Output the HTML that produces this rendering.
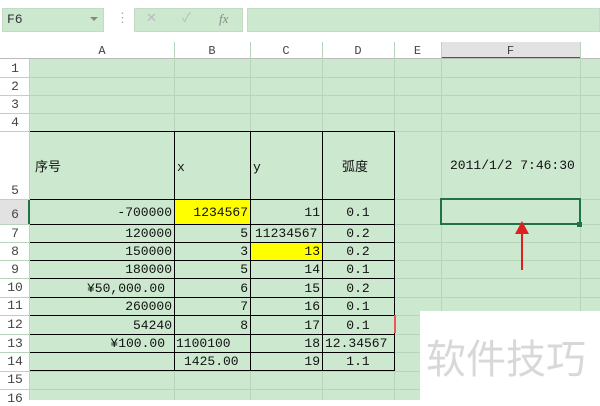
<!DOCTYPE html><html><head><style>
*{margin:0;padding:0;box-sizing:border-box}
body{width:600px;height:400px;overflow:hidden;background:#fff;position:relative;font-family:"Liberation Mono","Noto Sans CJK SC",monospace;font-size:13px;color:#111}
.a{position:absolute}
.g{background:#cce8cf}
.vl{position:absolute;width:1px;background:#b8d4bb}
.hl{position:absolute;height:1px;background:#b8d4bb}
.t{position:absolute;font-family:"Liberation Mono","Noto Sans CJK SC",monospace;font-size:13px;line-height:16px;white-space:nowrap}
.rh{position:absolute;left:0;width:30px;text-align:center;color:#444;font-size:13px}
.ch{position:absolute;top:44px;text-align:center;color:#444;font-size:12px}
.bk{position:absolute;background:#000}
</style></head><body>
<div class="a g" style="left:2px;top:8px;width:102px;height:24px;border:1px solid #c4d9c6"></div>
<div class="t" style="left:7px;top:12px;color:#333">F6</div>
<div class="a" style="left:90px;top:17px;border-left:4px solid transparent;border-right:4px solid transparent;border-top:4px solid #888"></div>
<div class="t" style="left:116px;top:11px;color:#aaa">⋮</div>
<div class="a g" style="left:134px;top:8px;width:109px;height:24px;border:1px solid #c4d9c6"></div>
<div class="t" style="left:146px;top:11px;color:#bbb">✕</div>
<div class="t" style="left:182px;top:11px;color:#bbb">✓</div>
<div class="t" style="left:219px;top:11px;color:#888;font-style:italic;font-family:'Liberation Serif',serif">fx</div>
<div class="a g" style="left:247px;top:8px;width:353px;height:24px;border:1px solid #c4d9c6"></div>
<div class="a" style="left:0;top:59px;width:30px;height:341px;border-right:1px solid #ccc"></div>
<div class="a g" style="left:30px;top:59px;width:570px;height:341px"></div>
<div class="a" style="left:441px;top:42px;width:139px;height:17px;background:#e2e2e2;border-bottom:2px solid #217346"></div>
<div class="a" style="left:0;top:199px;width:30px;height:25px;background:#e2e2e2;border-right:2px solid #217346"></div>
<div class="a" style="left:0;top:58px;width:600px;height:1px;background:#bbb"></div>
<div class="ch" style="left:30px;width:144px">A</div><div class="ch" style="left:174px;width:76px">B</div><div class="ch" style="left:250px;width:72px">C</div><div class="ch" style="left:322px;width:72px">D</div><div class="ch" style="left:394px;width:47px">E</div><div class="ch" style="left:441px;width:139px">F</div>
<div class="vl" style="left:174px;top:42px;height:358px"></div><div class="vl" style="left:250px;top:42px;height:358px"></div><div class="vl" style="left:322px;top:42px;height:358px"></div><div class="vl" style="left:394px;top:42px;height:358px"></div><div class="vl" style="left:441px;top:42px;height:358px"></div><div class="vl" style="left:580px;top:42px;height:358px"></div>
<div class="hl" style="left:0;top:77px;width:600px"></div><div class="hl" style="left:0;top:95px;width:600px"></div><div class="hl" style="left:0;top:113px;width:600px"></div><div class="hl" style="left:0;top:131px;width:600px"></div><div class="hl" style="left:0;top:199px;width:600px"></div><div class="hl" style="left:0;top:224px;width:600px"></div><div class="hl" style="left:0;top:242px;width:600px"></div><div class="hl" style="left:0;top:260px;width:600px"></div><div class="hl" style="left:0;top:278px;width:600px"></div><div class="hl" style="left:0;top:297px;width:600px"></div><div class="hl" style="left:0;top:315px;width:600px"></div><div class="hl" style="left:0;top:334px;width:600px"></div><div class="hl" style="left:0;top:352px;width:600px"></div><div class="hl" style="left:0;top:371px;width:600px"></div><div class="hl" style="left:0;top:389px;width:600px"></div>
<div class="rh" style="top:61px">1</div><div class="rh" style="top:79px">2</div><div class="rh" style="top:97px">3</div><div class="rh" style="top:115px">4</div><div class="rh" style="top:183px">5</div><div class="rh" style="top:207px">6</div><div class="rh" style="top:226px">7</div><div class="rh" style="top:244px">8</div><div class="rh" style="top:262px">9</div><div class="rh" style="top:280px">10</div><div class="rh" style="top:298px">11</div><div class="rh" style="top:317px">12</div><div class="rh" style="top:336px">13</div><div class="rh" style="top:354px">14</div><div class="rh" style="top:372px">15</div><div class="rh" style="top:391px">16</div>
<div class="a" style="left:175px;top:200px;width:75px;height:24px;background:#ff0"></div>
<div class="a" style="left:251px;top:243px;width:71px;height:17px;background:#ff0"></div>
<div class="bk" style="left:30px;top:131px;width:365px;height:1px"></div>
<div class="bk" style="left:30px;top:199px;width:365px;height:1px"></div>
<div class="bk" style="left:30px;top:224px;width:365px;height:1px"></div>
<div class="bk" style="left:30px;top:242px;width:365px;height:1px"></div>
<div class="bk" style="left:30px;top:260px;width:365px;height:1px"></div>
<div class="bk" style="left:30px;top:278px;width:365px;height:1px"></div>
<div class="bk" style="left:30px;top:297px;width:365px;height:1px"></div>
<div class="bk" style="left:30px;top:315px;width:365px;height:1px"></div>
<div class="bk" style="left:30px;top:334px;width:365px;height:1px"></div>
<div class="bk" style="left:30px;top:352px;width:365px;height:1px"></div>
<div class="bk" style="left:30px;top:370px;width:365px;height:1px"></div>
<div class="bk" style="left:174px;top:131px;width:1px;height:240px"></div>
<div class="bk" style="left:250px;top:131px;width:1px;height:240px"></div>
<div class="bk" style="left:322px;top:131px;width:1px;height:240px"></div>
<div class="bk" style="left:394px;top:131px;width:1px;height:240px"></div>
<div class="a" style="left:394px;top:315px;width:2px;height:18px;background:#e55"></div>
<div class="t" style="left:35px;top:158px;font-family:'Noto Sans CJK SC',sans-serif">序号</div>
<div class="t" style="left:177px;top:160px">x</div>
<div class="t" style="left:253px;top:160px">y</div>
<div class="t" style="left:342px;top:158px;font-family:'Noto Sans CJK SC',sans-serif">弧度</div>
<div class="t" style="left:450px;top:158px">2011/1/2 7:46:30</div>
<div class="t" style="left:30px;width:142px;text-align:right;top:205px">-700000</div>
<div class="t" style="left:30px;width:142px;text-align:right;top:226px">120000</div>
<div class="t" style="left:30px;width:142px;text-align:right;top:244px">150000</div>
<div class="t" style="left:30px;width:142px;text-align:right;top:262px">180000</div>
<div class="t" style="left:30px;width:135px;text-align:right;top:281px">¥50,000.00</div>
<div class="t" style="left:30px;width:142px;text-align:right;top:299px">260000</div>
<div class="t" style="left:30px;width:142px;text-align:right;top:318px">54240</div>
<div class="t" style="left:30px;width:135px;text-align:right;top:336px">¥100.00</div>
<div class="t" style="left:174px;width:74px;text-align:right;top:205px">1234567</div>
<div class="t" style="left:174px;width:74px;text-align:right;top:226px">5</div>
<div class="t" style="left:174px;width:74px;text-align:right;top:244px">3</div>
<div class="t" style="left:174px;width:74px;text-align:right;top:262px">5</div>
<div class="t" style="left:174px;width:74px;text-align:right;top:281px">6</div>
<div class="t" style="left:174px;width:74px;text-align:right;top:299px">7</div>
<div class="t" style="left:174px;width:74px;text-align:right;top:318px">8</div>
<div class="t" style="left:176px;top:336px">1100100</div>
<div class="t" style="left:184px;top:354px">1425.00</div>
<div class="t" style="left:250px;width:70px;text-align:right;top:205px">11</div>
<div class="t" style="left:255px;top:226px">11234567</div>
<div class="t" style="left:250px;width:70px;text-align:right;top:244px">13</div>
<div class="t" style="left:250px;width:70px;text-align:right;top:262px">14</div>
<div class="t" style="left:250px;width:70px;text-align:right;top:281px">15</div>
<div class="t" style="left:250px;width:70px;text-align:right;top:299px">16</div>
<div class="t" style="left:250px;width:70px;text-align:right;top:318px">17</div>
<div class="t" style="left:250px;width:70px;text-align:right;top:336px">18</div>
<div class="t" style="left:250px;width:70px;text-align:right;top:354px">19</div>
<div class="t" style="left:322px;width:72px;text-align:center;top:205px">0.1</div>
<div class="t" style="left:322px;width:72px;text-align:center;top:226px">0.2</div>
<div class="t" style="left:322px;width:72px;text-align:center;top:244px">0.2</div>
<div class="t" style="left:322px;width:72px;text-align:center;top:262px">0.1</div>
<div class="t" style="left:322px;width:72px;text-align:center;top:281px">0.2</div>
<div class="t" style="left:322px;width:72px;text-align:center;top:299px">0.1</div>
<div class="t" style="left:322px;width:72px;text-align:center;top:318px">0.1</div>
<div class="t" style="left:325px;top:336px">12.34567</div>
<div class="t" style="left:322px;width:72px;text-align:center;top:354px">1.1</div>
<div class="a" style="left:440px;top:198px;width:141px;height:27px;border:2px solid #217346"></div>
<div class="a" style="left:577px;top:222px;width:5px;height:5px;background:#217346"></div>
<svg class="a" style="left:510px;top:218px" width="26" height="55"><path d="M12 52 L12 14" stroke="#e02020" stroke-width="2"/><path d="M5 16 L12 3 L19 16 Z" fill="#e02020"/></svg>
<div class="a" style="left:420px;top:311px;width:180px;height:89px;background:#fff"></div>
<div class="t" style="left:426px;top:332px;font-size:40px;line-height:48px;color:#d8d8d8;font-family:'Noto Sans CJK SC',sans-serif">软件技巧</div>
</body></html>
